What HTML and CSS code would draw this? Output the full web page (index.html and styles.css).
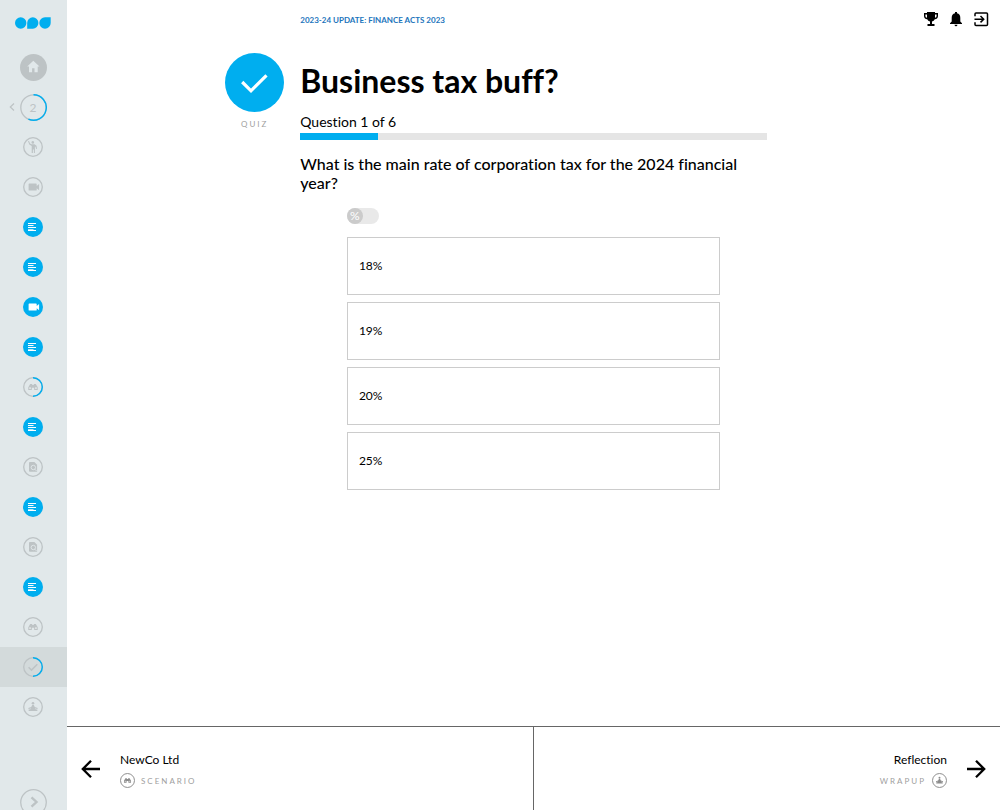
FILE: index.html
```html
<!DOCTYPE html>
<html lang="en">
<head>
    <meta charset="UTF-8">
    <meta name="viewport" content="width=device-width, initial-scale=1.0">
    <title>Business tax buff?</title>
    <link rel="stylesheet" href="styles.css">
</head>
<body>
    <svg class="sprite" aria-hidden="true">
        <symbol id="ring" viewBox="0 0 20 20">
            <circle cx="10" cy="10" r="9.3" fill="none" stroke="currentColor" stroke-width="1.3"/>
        </symbol>
        <symbol id="half" viewBox="0 0 20 20">
            <path d="M10 .7a9.3 9.3 0 0 1 0 18.6" fill="none" stroke="#00aeef" stroke-width="1.4"/>
        </symbol>
        <symbol id="text" viewBox="0 0 20 20">
            <circle cx="10" cy="10" r="10" fill="#00aeef"/>
            <path d="M5 6.500h8M5 8.500h5.500M5 10.500h8M5 13.500h8" fill="none" stroke="#fff" stroke-width="1"/>
            <path d="M5 12.500h5.500" fill="none" stroke="#fff" stroke-width="1" opacity=".7"/>
        </symbol>
        <symbol id="camera" viewBox="0 0 20 20">
            <path d="M6.300 6.500h6.700q.7 0 .7.700v1.800l2.400-2v6.200l-2.400-2v1.700q0 .7-.7.7h-6.700q-.7 0-.7-.7v-5.700q0-.7.7-.7z"/>
        </symbol>
        <symbol id="wave" viewBox="0 0 20 20">
            <circle cx="9.800" cy="5.400" r="1.300"/>
            <path d="M5 4.300 6 4l1 2.500 1.500.8h3l2 1.500.5 3-.9.200-.6-2.200-.6-.3v6.400h-1v-3.400h-1v3.400H8.700V9L6.300 7.500z"/>
        </symbol>
        <symbol id="binoculars" viewBox="0 0 20 20">
            <path d="M7.200 7h2v1h1.600V7h2l1.900 3.200v2.900h-3.500v-2.300H8.800v2.300H5.300v-2.900z"/>
            <path d="M6.200 10.300h1.700v1.800H6.200zM12.100 10.300h1.700v1.800h-1.700z" fill="#fff" opacity=".55"/>
        </symbol>
        <symbol id="research" viewBox="0 0 20 20">
            <path d="M6.900 5.100h4.500l2.700 2.700v6.900H6.900q-.9 0-.9-.9V6q0-.9.9-.9z"/>
            <path d="M11.700 12.100l2 2" stroke="#e1e8ea" stroke-width=".9"/>
            <circle cx="10.300" cy="10.500" r="2.200" fill="none" stroke="#e1e8ea" stroke-width=".9"/>
        </symbol>
        <symbol id="check" viewBox="0 0 20 20">
            <path d="M5.600 10.200l2.900 2.900 5.800-5.800" fill="none" stroke="currentColor" stroke-width="1.500"/>
        </symbol>
        <symbol id="lotus" viewBox="0 0 20 20">
            <circle cx="10" cy="6.200" r="1.300"/>
            <path d="M9.200 7.900h1.600l1 2 2.900 1.200-.3.900-2.400-.5v.5l2.600.8-.4 1.300H5.800l-.4-1.300 2.600-.8v-.5l-2.400.5-.3-.9 2.900-1.200z"/>
        </symbol>
    </svg>

    <div class="layout">
        <nav class="sidebar" aria-label="Course">
            <a href="#" class="logo" aria-label="Start">
                <svg width="36" height="12" viewBox="0 0 36 12">
                    <circle cx="5.700" cy="6" r="5.700"/>
                    <path d="M12.200 11.700V6A5.600 5.700 0 1 1 17.800 11.700z"/>
                    <path d="M35.700.300V6A5.700 5.700 0 1 1 30 .300z"/>
                </svg>
            </a>
            <a href="#" class="step" aria-label="Home">
                <svg class="step-large" viewBox="0 0 27 27">
                    <circle cx="13.500" cy="13.500" r="13.500"/>
                    <path d="M13.300 6.800l6.200 5.700h-1.800v5.700h-3.200v-4h-2.400v4H9v-5.700H7.200z" fill="#e1e8ea"/>
                </svg>
            </a>
            <a href="#" class="step step-section">
                <svg class="back" viewBox="0 0 6 8"><path d="M5 .5 1.300 4 5 7.500" fill="none" stroke="currentColor" stroke-width="1.200"/></svg>
                <svg class="step-large" viewBox="0 0 27 27">
                    <circle cx="13.500" cy="13.500" r="12.700" fill="none" stroke="currentColor" stroke-width="1.300"/>
                    <path d="M13.500.8A12.700 12.700 0 1 1 8.400 25.100" fill="none" stroke="#00aeef" stroke-width="1.400"/>
                </svg>
                <span class="section-number">2</span>
            </a>
            <a href="#" class="step" aria-label="Welcome"><svg viewBox="0 0 20 20"><use href="#ring"/><use href="#wave"/></svg></a>
            <a href="#" class="step" aria-label="Video"><svg viewBox="0 0 20 20"><use href="#ring"/><use href="#camera"/></svg></a>
            <a href="#" class="step" aria-label="Text"><svg viewBox="0 0 20 20"><use href="#text"/></svg></a>
            <a href="#" class="step" aria-label="Text"><svg viewBox="0 0 20 20"><use href="#text"/></svg></a>
            <a href="#" class="step step-done" aria-label="Video"><svg viewBox="0 0 20 20"><circle cx="10" cy="10" r="10" fill="#00aeef"/><use href="#camera"/></svg></a>
            <a href="#" class="step" aria-label="Text"><svg viewBox="0 0 20 20"><use href="#text"/></svg></a>
            <a href="#" class="step" aria-label="Scenario"><svg viewBox="0 0 20 20"><use href="#ring"/><use href="#half"/><use href="#binoculars"/></svg></a>
            <a href="#" class="step" aria-label="Text"><svg viewBox="0 0 20 20"><use href="#text"/></svg></a>
            <a href="#" class="step" aria-label="Research"><svg viewBox="0 0 20 20"><use href="#ring"/><use href="#research"/></svg></a>
            <a href="#" class="step" aria-label="Text"><svg viewBox="0 0 20 20"><use href="#text"/></svg></a>
            <a href="#" class="step" aria-label="Research"><svg viewBox="0 0 20 20"><use href="#ring"/><use href="#research"/></svg></a>
            <a href="#" class="step" aria-label="Text"><svg viewBox="0 0 20 20"><use href="#text"/></svg></a>
            <a href="#" class="step" aria-label="Scenario"><svg viewBox="0 0 20 20"><use href="#ring"/><use href="#binoculars"/></svg></a>
            <a href="#" class="step step-active" aria-label="Quiz" aria-current="page"><svg viewBox="0 0 20 20"><use href="#ring"/><use href="#half"/><use href="#check"/></svg></a>
            <a href="#" class="step" aria-label="Wrapup"><svg viewBox="0 0 20 20"><use href="#ring"/><use href="#lotus"/></svg></a>
            <button class="expand" aria-label="Expand menu">
                <svg class="step-large" viewBox="0 0 27 27">
                    <circle cx="13.500" cy="13.500" r="12.800" fill="none" stroke="currentColor" stroke-width="1.300"/>
                    <path d="M11.500 8.300l5 4.700-5 4.700" fill="none" stroke="currentColor" stroke-width="2.400"/>
                </svg>
            </button>
        </nav>

        <div class="page">
            <header class="topbar">
                <a href="#" class="course">2023-24 UPDATE: FINANCE ACTS 2023</a>
                <div class="tools">
                    <button aria-label="Achievements">
                        <svg viewBox="0 0 16 16">
                            <path d="M4 1h8v1h3v3q0 3-3.200 3.200Q11 10 9 10.500V13h2.500v2h-7v-2H7v-2.500Q5 10 4.200 8.200 1 8 1 5V2h3zM4 3.400H2.400V5q0 1.500 1.600 1.800zm8 0v3.400q1.600-.3 1.600-1.800V3.400z"/>
                        </svg>
                    </button>
                    <button aria-label="Notifications">
                        <svg viewBox="0 0 16 16">
                            <path d="M7 2.200V1h2v1.200q3.300.9 3.300 4.500v3.800l1.700 1.700v.8H2v-.8l1.700-1.700V6.700Q3.700 3.100 7 2.200zM6.500 13.800h3q-.2 1.500-1.500 1.500t-1.500-1.500z"/>
                        </svg>
                    </button>
                    <button aria-label="Exit">
                        <svg viewBox="0 0 16 16">
                            <path d="M2 5.300V3q0-1 1-1h10.500q1 0 1 1v10.500q0 1-1 1H3q-1 0-1-1v-2.300M1.500 8.200h9M7.500 5l3.200 3.200-3.200 3.200" fill="none" stroke="currentColor" stroke-width="1.500"/>
                        </svg>
                    </button>
                </div>
            </header>

            <main class="content">
                <div class="kind">
                    <svg class="kind-icon" viewBox="0 0 59 59">
                        <circle cx="29.500" cy="29.500" r="29.500" fill="#00aeef"/>
                        <path d="M17.200 29l8.800 8.800 15.500-15.500" fill="none" stroke="#fff" stroke-width="3.200"/>
                    </svg>
                    <span class="caption">QUIZ</span>
                </div>

                <div class="quiz">
                    <h1>Business tax buff?</h1>
                    <label class="counter" for="progress">Question 1 of 6</label>
                    <progress id="progress" value="1" max="6"></progress>
                    <h2>What is the main rate of corporation tax for the 2024 financial year?</h2>
                    <div class="answers">
                        <label class="switch">
                            <input type="checkbox" aria-label="Show percentages">
                            <span class="knob">%</span>
                        </label>
                        <button class="answer">18%</button>
                        <button class="answer">19%</button>
                        <button class="answer">20%</button>
                        <button class="answer">25%</button>
                    </div>
                </div>
            </main>

            <footer class="pager">
                <a href="#" class="pager-link pager-prev">
                    <svg class="arrow" viewBox="0 0 20 20"><path d="M19 10H2.500M10 1.800 1.800 10l8.200 8.200" fill="none" stroke="currentColor" stroke-width="2.300"/></svg>
                    <span class="pager-text">
                        <span class="pager-title">NewCo Ltd</span>
                        <span class="pager-kind">
                            <svg viewBox="0 0 20 20"><use href="#ring"/><use href="#binoculars"/></svg>
                            <span class="caption">SCENARIO</span>
                        </span>
                    </span>
                </a>
                <a href="#" class="pager-link pager-next">
                    <svg class="arrow" viewBox="0 0 20 20"><path d="M1 10h16.500M10 1.800l8.200 8.200-8.200 8.200" fill="none" stroke="currentColor" stroke-width="2.300"/></svg>
                    <span class="pager-text">
                        <span class="pager-title">Reflection</span>
                        <span class="pager-kind">
                            <svg viewBox="0 0 20 20"><use href="#ring"/><use href="#lotus"/></svg>
                            <span class="caption">WRAPUP</span>
                        </span>
                    </span>
                </a>
            </footer>
        </div>
    </div>
</body>
</html>
```
FILE: styles.css
```css
* {
    box-sizing: border-box;
}
body {
    margin: 0;
    font-family: "Avenir Next", Avenir, Lato, sans-serif;
    font-variant-ligatures: none;
    color: #000;
    background: #fff;
}
a {
    color: inherit;
    text-decoration: none;
}
button {
    padding: 0;
    border: 0;
    background: none;
    color: inherit;
    font: inherit;
    cursor: pointer;
}
svg {
    display: block;
    fill: currentColor;
}
.sprite {
    display: none;
}
.layout {
    display: flex;
    height: 100vh;
}

/* Sidebar */
.sidebar {
    display: flex;
    flex-direction: column;
    flex: none;
    width: 67px;
    overflow: hidden;
    background: #e1e8ea;
    color: #bdc3c5;
}
.logo {
    display: flex;
    flex: none;
    align-items: center;
    justify-content: center;
    height: 47px;
    padding: 0 1px 2px 0;
    color: #00aeef;
}
.step {
    position: relative;
    display: flex;
    flex: none;
    align-items: center;
    justify-content: center;
    height: 40px;
    padding-right: 1px;
}
.step svg {
    width: 20px;
    height: 20px;
}
.step-done {
    color: #fff;
}
.step-active {
    background: #d3dadb;
}
.step .step-large,
.step-large {
    width: 27px;
    height: 27px;
}
.step .back {
    position: absolute;
    left: 9px;
    width: 6px;
    height: 8px;
}
.section-number {
    position: absolute;
    font-size: 12px;
}
.expand {
    display: flex;
    flex: none;
    justify-content: center;
    margin-top: 62px;
}

/* Page */
.page {
    display: flex;
    flex-direction: column;
    flex: 1;
    min-width: 0;
}
.topbar {
    display: grid;
    grid-template-columns: 1fr 3fr;
    align-items: center;
    height: 37px;
}
.topbar .course {
    grid-column: 2;
    grid-row: 1;
    padding-top: 2px;
    color: #1c75bc;
    font-size: 8px;
    font-weight: bold;
}
.tools {
    display: flex;
    grid-column: 2;
    grid-row: 1;
    justify-self: end;
    gap: 9px;
    padding-right: 11px;
}
.tools svg {
    width: 16px;
    height: 16px;
}
.content {
    display: grid;
    grid-template-columns: 1fr 2fr 1fr;
    align-items: start;
    flex: 1;
    padding-top: 16px;
}
.kind {
    display: flex;
    flex-direction: column;
    align-items: center;
    justify-self: end;
    gap: 6px;
    padding-right: 16px;
}
.kind-icon {
    width: 59px;
    height: 59px;
}
.caption {
    color: #a0a0a0;
    font-size: 8px;
    line-height: 12px;
    letter-spacing: 2px;
}
h1 {
    margin: 8px 0 12px;
    font-size: 32px;
    line-height: 40px;
}
.counter {
    display: block;
    font-size: 14px;
    line-height: 18px;
}
progress {
    display: block;
    width: 100%;
    height: 7px;
    margin-top: 2px;
    border: 0;
    background: #e5e5e5;
    appearance: none;
}
progress::-webkit-progress-bar {
    background: #e5e5e5;
}
progress::-webkit-progress-value {
    background: #00aeef;
}
progress::-moz-progress-bar {
    background: #00aeef;
}
h2 {
    margin: 14px 0 16px;
    font-size: 16px;
    font-weight: 500;
    line-height: 19px;
}
.answers {
    display: flex;
    flex-direction: column;
    gap: 7px;
    padding: 0 10%;
}
.switch {
    display: flex;
    width: 32px;
    margin-bottom: 6px;
    border-radius: 8px;
    background: #e9e9e9;
}
.switch input {
    position: absolute;
    opacity: 0;
}
.knob {
    width: 16px;
    height: 16px;
    border-radius: 50%;
    background: #cbcbcb;
    color: #fff;
    font-size: 12px;
    line-height: 16px;
    text-align: center;
}
.switch input:checked + .knob {
    margin-left: 16px;
    background: #00aeef;
}
.answer {
    height: 58px;
    padding: 0 11px 2px;
    border: 1px solid #ccc;
    font-size: 12px;
    text-align: left;
}

/* Previous and next page */
.pager {
    display: grid;
    grid-template-columns: 1fr 1fr;
    height: 84px;
    border-top: 1px solid #666;
}
.pager-link {
    display: flex;
    align-items: center;
    gap: 19px;
    padding: 5px 14px 5px;
}
.pager-prev {
    border-right: 1px solid #666;
}
.pager-next {
    flex-direction: row-reverse;
}
.arrow {
    width: 20px;
    height: 20px;
}
.pager-text {
    display: flex;
    flex-direction: column;
    gap: 4px;
    padding-top: 2px;
}
.pager-next .pager-text {
    align-items: flex-end;
}
.pager-title {
    font-size: 12px;
    line-height: 18px;
}
.pager-kind {
    display: flex;
    align-items: center;
    gap: 6px;
    color: #8c8c8c;
}
.pager-next .pager-kind {
    flex-direction: row-reverse;
}
.pager-kind svg {
    width: 15px;
    height: 15px;
}
```
